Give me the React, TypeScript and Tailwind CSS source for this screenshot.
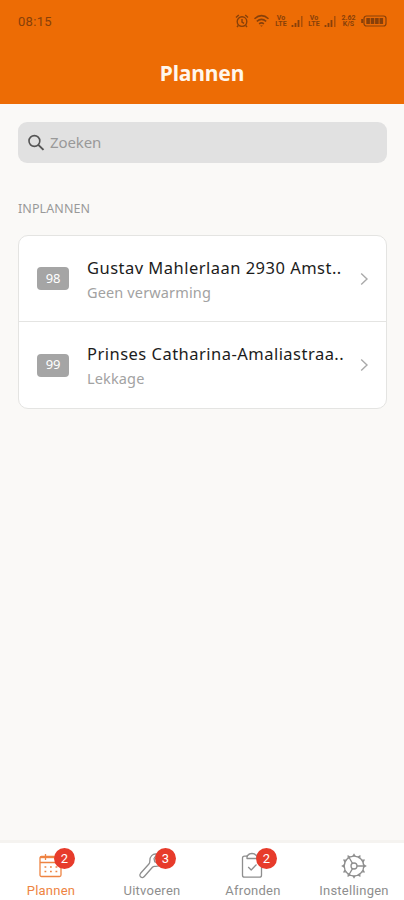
import type { ReactNode } from 'react';

type Job = { id: number; address: string; issue: string };

const jobs: Job[] = [
  { id: 98, address: 'Gustav Mahlerlaan 2930 Amst..', issue: 'Geen verwarming' },
  { id: 99, address: 'Prinses Catharina-Amaliastraa..', issue: 'Lekkage' },
];

export default function App() {
  return (
    <div className="flex h-[900px] w-[404px] flex-col overflow-hidden bg-[#faf9f7] font-['Noto_Sans',sans-serif]">
      <header className="flex h-[104px] shrink-0 flex-col bg-[#ed6c05]">
        <StatusBar />
        <h1 className="pt-[16px] text-center text-[21px] leading-[30px] font-bold tracking-[-0.15px] text-[#fff6ec]">Plannen</h1>
      </header>

      <main className="flex flex-1 flex-col pt-[18px] pr-[17px] pl-[18px]">
        <div className="flex h-[41px] items-center gap-[5px] rounded-[9px] bg-[#e1e1e1] pl-[9px]">
          <SearchIcon />
          <span className="text-[15px] tracking-[-0.1px] text-[#999]">Zoeken</span>
        </div>

        <h2 className="mt-[36px] text-[12.5px] leading-[20px] tracking-[0.1px] text-[#999]">INPLANNEN</h2>

        <div className="mt-[16px] overflow-hidden rounded-[10px] border border-[#e4e4e2] bg-white">
          {jobs.map((job) => (
            <JobRow key={job.id} job={job} />
          ))}
        </div>
      </main>

      <nav className="flex h-[60px] shrink-0 border-t-[3px] border-[#f5f3f0] bg-white">
        <Tab label="Plannen" count={2} active>
          <CalendarIcon />
        </Tab>
        <Tab label="Uitvoeren" count={3}>
          <WrenchIcon />
        </Tab>
        <Tab label="Afronden" count={2}>
          <ClipboardIcon />
        </Tab>
        <Tab label="Instellingen">
          <GearIcon />
        </Tab>
      </nav>
    </div>
  );
}

function JobRow({ job }: { job: Job }) {
  return (
    <div className="flex h-[85px] items-center border-[#e4e4e2] pl-[18px] not-first:h-[87px] not-first:border-t">
      <span className="flex h-[23px] w-[32px] shrink-0 items-center justify-center rounded-[4px] bg-[#a5a5a5] text-[13px] tracking-[-0.3px] text-white">
        {job.id}
      </span>
      <div className="ml-[18px] w-[264px] shrink-0 pt-[3px] whitespace-nowrap">
        <div className="text-[16.5px] leading-[24px] tracking-[0.48px] text-[#1c1c1c]">{job.address}</div>
        <div className="text-[14.5px] leading-[25px] tracking-[0.14px] text-[#a2a2a2]">{job.issue}</div>
      </div>
      <svg className="ml-[9px] h-[14px] w-[9px] shrink-0" viewBox="0 0 9 14" fill="none" stroke="#aaa" strokeWidth="1.4">
        <path d="M1.2 1.5 7 7l-5.8 5.5" />
      </svg>
    </div>
  );
}

function Tab({ label, count, active, children }: { label: string; count?: number; active?: boolean; children: ReactNode }) {
  return (
    <div className={`flex flex-1 flex-col items-center pt-[8px] pl-[1px] ${active ? 'text-[#ee8443]' : 'text-[#8e8e8e]'}`}>
      <div className="relative h-[31px] w-[30px]">
        {children}
        {count != null && (
          <span className="absolute -top-[3px] left-[18px] flex h-[21px] w-[21px] items-center justify-center rounded-full bg-[#e73b2b] font-['Roboto',sans-serif] text-[13px] text-white">
            {count}
          </span>
        )}
      </div>
      <span className="font-['Roboto',sans-serif] text-[13px] leading-[18px] tracking-[0.25px]">{label}</span>
    </div>
  );
}

function StatusBar() {
  return (
    <div className="flex h-[42px] items-center pl-[18px] text-[#87400a]">
      <span className="pt-[2px] font-['Roboto',sans-serif] text-[13px] tracking-[0.3px]">08:15</span>
      <div className="ml-auto flex items-center pr-[17px]">
        <svg className="h-[14px] w-[14px]" viewBox="0 0 14 14" fill="none" stroke="currentColor" strokeWidth="1.4">
          <circle cx="7" cy="7.6" r="4.8" />
          <path d="M1 3.5 3.8 1M13 3.5 10.2 1M7 5v3l2 1.3M3.3 11.5 2 13M10.7 11.5 12 13" />
        </svg>
        <svg className="ml-[4px] h-[14px] w-[18px]" viewBox="0 0 17 14" fill="none" stroke="currentColor" strokeWidth="1.5">
          <path d="M1 4.8q7-6.4 14 0M3.3 7.4q4.7-4 9.4 0M5.6 9.9q2.4-2 4.8 0" />
          <path d="m6.6 11.4 1.4 1.4 1.4-1.4z" fill="currentColor" stroke="none" />
        </svg>
        <Stacked top="Vo" bottom="LTE" className="ml-[4px] w-[12px]" />
        <Signal />
        <Stacked top="Vo" bottom="LTE" className="ml-[4px] w-[12px]" />
        <Signal />
        <Stacked top="2.62" bottom="K/S" className="ml-[3px] w-[17px]" />
        <svg className="ml-[4px] h-[12px] w-[26px]" viewBox="0 0 26 12" fill="none" stroke="currentColor">
          <rect x="3" y="1" width="22" height="10" rx="2.5" strokeWidth="1.2" />
          <path d="M1.2 4v4" strokeWidth="2" />
          <path d="M5.3 6h17.2" strokeWidth="6" strokeDasharray="3.6 .8" />
        </svg>
      </div>
    </div>
  );
}

function Stacked({ top, bottom, className }: { top: string; bottom: string; className: string }) {
  return (
    <div className={`flex flex-col items-center font-['Roboto',sans-serif] text-[7px] leading-[6.5px] font-bold ${className}`}>
      <span>{top}</span>
      <span>{bottom}</span>
    </div>
  );
}

function Signal() {
  return (
    <svg className="ml-[4px] h-[12px] w-[13px]" viewBox="0 0 13 12" fill="none" stroke="currentColor" strokeWidth="1.8">
      <path d="M1.5 12V10M4.5 12V8M7.5 12V5" />
      <path d="M10.8 12V1" strokeWidth="1.4" opacity=".7" />
    </svg>
  );
}

function SearchIcon() {
  return (
    <svg className="h-[18px] w-[18px]" viewBox="0 0 18 18" fill="none" stroke="#555" strokeWidth="1.6">
      <circle cx="7.4" cy="7" r="5.4" />
      <path d="m11.3 10.9 5.2 5" strokeWidth="2" />
    </svg>
  );
}

function CalendarIcon() {
  return (
    <svg className="h-[30px] w-[30px]" viewBox="0 0 30 30" fill="none" stroke="currentColor" strokeWidth="1.3">
      <rect x="4" y="5.5" width="21" height="20" rx="1.5" />
      <path d="M4 11.5h21M9.5 3v6M19.5 3v6" />
      <path d="M4 6.3h21" strokeWidth="1.8" />
      <path d="M8.5 16h13M8.5 20.5h13" strokeWidth="1.7" strokeDasharray="1.8 3.7" />
    </svg>
  );
}

function WrenchIcon() {
  return (
    <svg className="h-[30px] w-[30px]" viewBox="0 0 30 30" fill="none" stroke="currentColor" strokeWidth="1.3" strokeLinejoin="round">
      <path d="M20 3.2c-4-1-7.8 2.4-7.2 7.1.1 1-.2 1.9-.9 2.7l-8.3 9.3c-1.1 1.3-.9 2.7.2 3.6 1.1 1 2.5.8 3.5-.4l8.1-9.2c.7-.8 1.5-1.1 2.5-1 4.4.6 7.9-2.8 7.1-7.1l-4 3.4-3.2-.7-.8-3.4z" />
    </svg>
  );
}

function ClipboardIcon() {
  return (
    <svg className="h-[30px] w-[30px]" viewBox="0 0 30 30" fill="none" stroke="currentColor" strokeWidth="1.3" strokeLinejoin="round">
      <path d="M10 5.2H6.5a2 2 0 0 0-2 2v17a2 2 0 0 0 2 2h15a2 2 0 0 0 2-2v-17a2 2 0 0 0-2-2H18" />
      <path d="M9 7.5v-2Q9 4 10.500 4q.5-1.500 3.500-1.500T17.500 4Q19 4 19 5.500v2z" />
      <path d="m10.200 16 3 3 5.300-5.500" />
    </svg>
  );
}

const teeth = Array.from({ length: 12 }, (_, i) => i * 30);

function GearIcon() {
  return (
    <svg className="h-[30px] w-[30px]" viewBox="0 0 30 30" fill="none" stroke="currentColor" strokeWidth="1.3">
      <circle cx="15" cy="15" r="9.8" />
      {teeth.map((angle) => (
        <path key={angle} d="M13.300 5 15 2.200 16.700 5z" fill="currentColor" stroke="none" transform={`rotate(${angle} 15 15)`} />
      ))}
      <circle cx="15" cy="15" r="3" />
      <path d="M18 15h6.800M13.500 12.400l-3.400-5.900M13.500 17.600l-3.400 5.900" />
    </svg>
  );
}
